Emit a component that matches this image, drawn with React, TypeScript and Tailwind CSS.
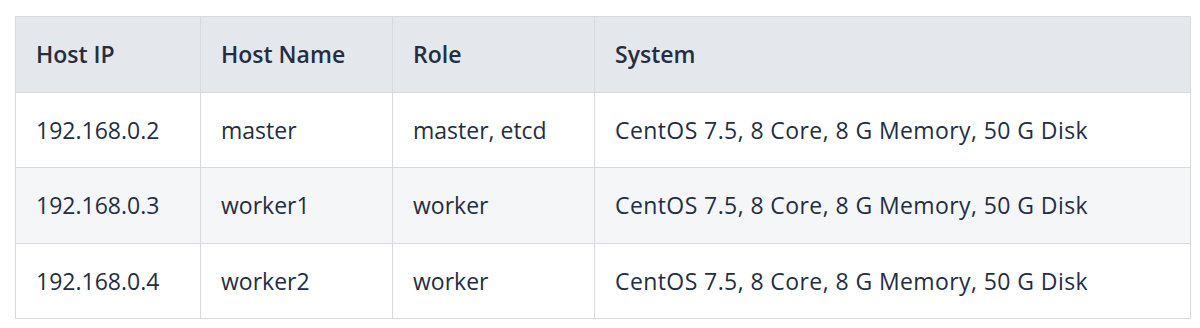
import React from "react";

const hosts = [
  { ip: "192.168.0.2", name: "master", role: "master, etcd", system: "CentOS 7.5, 8 Core, 8 G Memory, 50 G Disk" },
  { ip: "192.168.0.3", name: "worker1", role: "worker", system: "CentOS 7.5, 8 Core, 8 G Memory, 50 G Disk" },
  { ip: "192.168.0.4", name: "worker2", role: "worker", system: "CentOS 7.5, 8 Core, 8 G Memory, 50 G Disk" },
];

export default function App() {
  return (
    <div className="bg-white pt-4 pl-[15px] pr-[10px] pb-2 font-['Open_Sans','Liberation_Sans',sans-serif]">
      <table className="w-[1176px] border-collapse border border-[#d6dadf] text-[23px] text-[#242e42]">
        <thead>
          <tr className="bg-[#e4e8ec] h-[76px]">
            <th className="w-[185px] border border-[#d6dadf] px-5 text-left font-semibold">Host IP</th>
            <th className="w-[192px] border border-[#d6dadf] px-5 text-left font-semibold">Host Name</th>
            <th className="w-[202px] border border-[#d6dadf] px-5 text-left font-semibold">Role</th>
            <th className="border border-[#d6dadf] px-5 text-left font-semibold">System</th>
          </tr>
        </thead>
        <tbody>
          {hosts.map((h, i) => (
            <tr key={h.ip} className={i % 2 === 1 ? "bg-[#f4f6f8] h-[76px]" : "bg-white h-[75px]"}>
              <td className="border border-[#d6dadf] px-5">{h.ip}</td>
              <td className="border border-[#d6dadf] px-5">{h.name}</td>
              <td className="border border-[#d6dadf] px-5">{h.role}</td>
              <td className="border border-[#d6dadf] px-5 tracking-[0.018em]">{h.system}</td>
            </tr>
          ))}
        </tbody>
      </table>
    </div>
  );
}
